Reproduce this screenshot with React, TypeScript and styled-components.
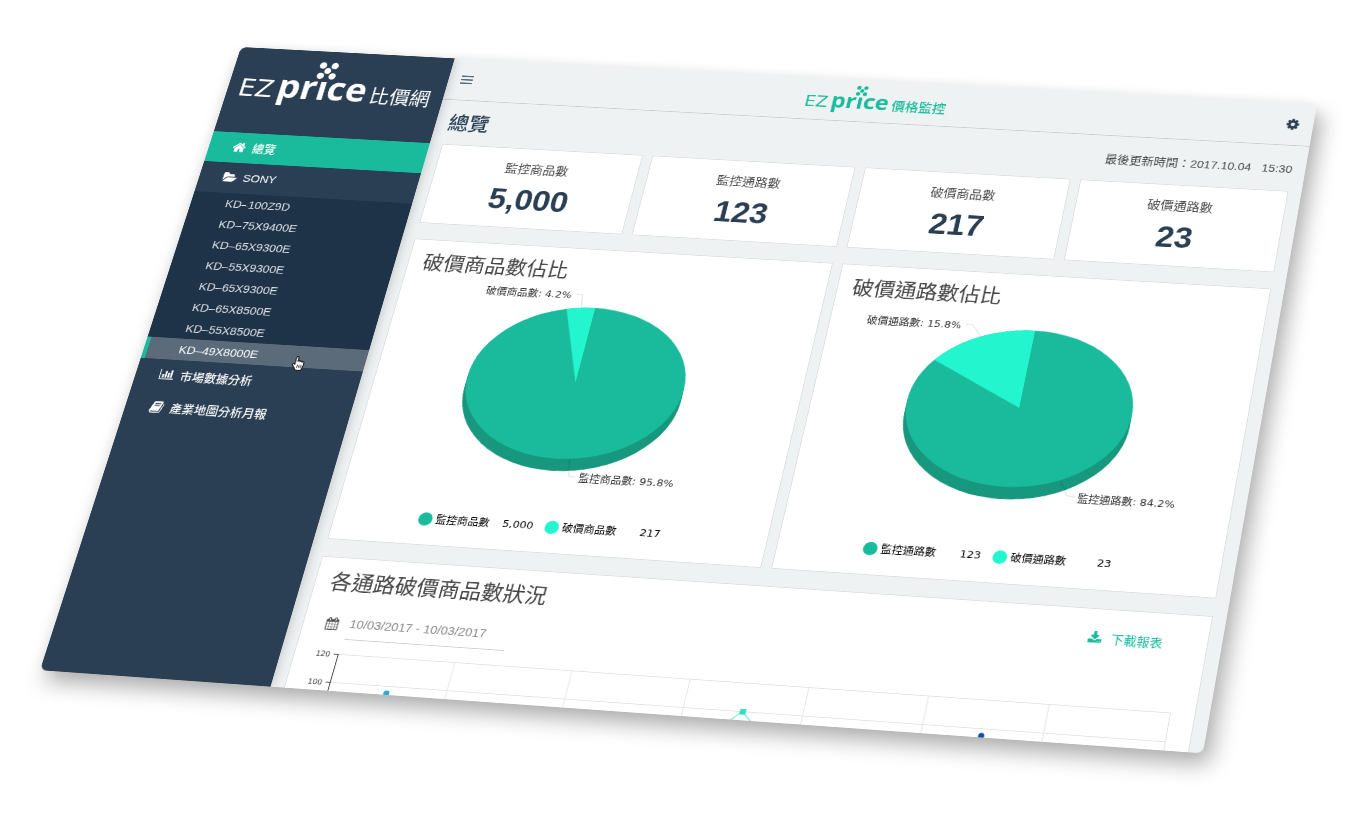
import React, { useLayoutEffect, useRef, useState } from 'react';
import styled, { createGlobalStyle, css } from 'styled-components';

const color = {
  navy: '#2a3f54',
  navyDark: '#1f3348',
  navyHover: '#5b6b7a',
  teal: '#1abb9c',
  tealDark: '#17977e',
  mint: '#23f5ce',
  page: '#eef2f3',
  line: '#dcdfe0',
  text: '#4a4a4a',
};

const sans = '"Liberation Sans", "Noto Sans CJK TC", sans-serif';
const chartFont = '"DejaVu Sans", "Noto Sans CJK TC", sans-serif';

const GlobalStyle = createGlobalStyle`
  *, *::before, *::after { box-sizing: border-box; }
  body { margin: 0; background: #fff; font-family: ${sans}; color: ${color.text}; }
  h1, h2, p, ul, dl, dd { margin: 0; padding: 0; }
  ul { list-style: none; }
  a { color: inherit; text-decoration: none; }
  button { border: 0; padding: 0; background: none; color: inherit; cursor: pointer; }
  svg { display: block; }
`;

/* ---------- tilted screen ---------- */

type Point = [number, number];

// Corners of the tilted screen as fractions of the stage width, clockwise from top left.
const CORNERS: Point[] = [
  [241 / 1366, 47 / 1366],
  [1317 / 1366, 104.3 / 1366],
  [1203 / 1366, 753.4 / 1366],
  [40 / 1366, 670.2 / 1366],
];
const SCREEN_RATIO = 850 / 1366;

function quadMatrix(stageWidth: number): string {
  const [[x0, y0], [x1, y1], [x2, y2], [x3, y3]] = CORNERS.map(([x, y]) => [x * stageWidth, y * stageWidth]);
  const w = stageWidth;
  const h = stageWidth * SCREEN_RATIO;
  const dx1 = x1 - x2, dx2 = x3 - x2, sx = x0 - x1 + x2 - x3;
  const dy1 = y1 - y2, dy2 = y3 - y2, sy = y0 - y1 + y2 - y3;
  const det = dx1 * dy2 - dx2 * dy1;
  const g = (sx * dy2 - dx2 * sy) / det;
  const k = (dx1 * sy - sx * dy1) / det;
  const m = [
    (x1 - x0 + g * x1) / w, (y1 - y0 + g * y1) / w, 0, g / w,
    (x3 - x0 + k * x3) / h, (y3 - y0 + k * y3) / h, 0, k / h,
    0, 0, 1, 0,
    x0, y0, 0, 1,
  ];
  return `matrix3d(${m.map((n) => n.toFixed(8)).join(',')})`;
}

const Stage = styled.div`
  width: 100%;
  aspect-ratio: 1366 / 820;
  overflow: hidden;
`;

const Screen = styled.div`
  display: flex;
  width: 100%;
  aspect-ratio: 1366 / 850;
  overflow: hidden;
  border-radius: 8px;
  background: ${color.page};
  transform-origin: 0 0;
  box-shadow: 10px 14px 26px rgba(0, 0, 0, 0.3), 0 0 20px rgba(0, 0, 0, 0.05);
`;

/* ---------- icons ---------- */

const ICONS = {
  home: [1792, 'M1472 992v480q0 26-19 45t-45 19h-384v-384h-256v384h-384q-26 0-45-19t-19-45v-480q0-1 .5-3t.5-3l575-474 575 474q1 2 1 6zm223-69l-62 74q-8 9-21 11h-3q-13 0-21-7l-692-577-692 577q-12 8-24 7-13-2-21-11l-62-74q-8-10-7-23.5t11-21.5l719-599q32-26 76-26t76 26l244 204v-195q0-14 9-23t23-9h192q14 0 23 9t9 23v408l219 182q10 8 11 21.5t-7 23.5z'],
  folder: [1943, 'M1943 952q0 31-31 66l-336 396q-43 51-120.5 86.5t-143.5 35.5h-1088q-34 0-60.5-13t-26.5-43q0-31 31-66l336-396q43-51 120.5-86.5t143.5-35.5h1088q34 0 60.5 13t26.5 43zm-343-344v160h-832q-94 0-197 47.5t-164 119.5l-337 396-5 6q0-4-.5-12.5t-.5-12.5v-960q0-92 66-158t158-66h320q92 0 158 66t66 158v32h544q92 0 158 66t66 158z'],
  chart: [2048, 'M640 768v512h-256v-512h256zm384-512v1024h-256v-1024h256zm1024 1152v128h-2048v-1536h128v1408h1920zm-640-896v768h-256v-768h256zm384-384v1152h-256v-1152h256z'],
  book: [1792, 'M1703 478q40 57 18 129l-275 906q-19 64-76.5 107.5t-122.5 43.5h-923q-77 0-148.5-53.5t-99.5-131.5q-24-67-2-127 0-4 3-27t4-37q1-8-3-21.5t-3-19.5q2-11 8-21t16.5-23.5 16.5-23.5q23-38 45-91.5t30-91.5q3-10 .5-30t-.5-28q3-11 17-28t17-23q21-36 42-92t25-90q1-9-2.5-32t.5-28q4-13 22-30.5t22-22.5q19-26 42.5-84.5t27.5-96.5q1-8-3-25.5t-2-26.5q2-8 9-18t18-23 17-21q8-12 16.5-30.5t15-35 16-36 19.5-32 26.5-23.5 36-11.5 47.5 5.5l-1 3q38-9 51-9h761q74 0 114 56t18 130l-274 906q-36 119-71.5 153.5t-128.5 34.5h-869q-27 0-38 15-11 16-1 43 24 70 144 70h923q29 0 56-15.5t35-41.5l300-987q7-22 5-57 38 15 59 43zm-1064 2q-4 13 2 22.5t20 9.5h608q13 0 25.5-9.5t16.5-22.5l21-64q4-13-2-22.5t-20-9.5h-608q-13 0-25.5 9.5t-16.5 22.5zm-83 256q-4 13 2 22.5t20 9.5h608q13 0 25.5-9.5t16.5-22.5l21-64q4-13-2-22.5t-20-9.5h-608q-13 0-25.5 9.5t-16.5 22.5z'],
  cog: [1792, 'M1152 896q0-106-75-181t-181-75-181 75-75 181 75 181 181 75 181-75 75-181zm512-109v222q0 12-8 23t-20 13l-185 28q-19 54-39 91 35 50 107 138 10 12 10 25t-9 23q-27 37-99 108t-94 71q-12 0-26-9l-138-108q-44 23-91 38-16 136-29 186-7 28-36 28h-222q-14 0-24.5-8.5t-11.5-21.5l-28-184q-49-16-90-37l-141 107q-10 9-25 9-14 0-25-11-126-114-165-168-7-10-7-23 0-12 8-23 15-21 51-66.5t54-70.5q-27-50-41-99l-183-27q-13-2-21-12.5t-8-23.5v-222q0-12 8-23t19-13l186-28q14-46 39-92-40-57-107-138-10-12-10-24 0-10 9-23 26-36 98.5-107.5t94.5-71.5q13 0 26 10l138 107q44-23 91-38 16-136 29-186 7-28 36-28h222q14 0 24.5 8.5t11.5 21.5l28 184q49 16 90 37l142-107q9-9 24-9 13 0 25 10 129 119 165 170 7 8 7 22 0 12-8 23-15 21-51 66.5t-54 70.5q26 50 41 98l183 28q13 2 21 12.5t8 23.5z'],
  calendar: [1792, 'M192 1664h288v-288h-288v288zm352 0h320v-288h-320v288zm-352-352h288v-320h-288v320zm352 0h320v-320h-320v320zm-352-384h288v-288h-288v288zm736 736h320v-288h-320v288zm-384-736h320v-288h-320v288zm768 736h288v-288h-288v288zm-384-352h320v-320h-320v320zm-352-864v-288q0-13-9.5-22.5t-22.5-9.5h-64q-13 0-22.5 9.5t-9.5 22.5v288q0 13 9.5 22.5t22.5 9.5h64q13 0 22.5-9.5t9.5-22.5zm736 864h288v-320h-288v320zm-384-384h320v-288h-320v288zm384 0h288v-288h-288v288zm32-480v-288q0-13-9.5-22.5t-22.5-9.5h-64q-13 0-22.5 9.5t-9.5 22.5v288q0 13 9.5 22.5t22.5 9.5h64q13 0 22.5-9.5t9.5-22.5zm384-64v1280q0 52-38 90t-90 38h-1408q-52 0-90-38t-38-90v-1280q0-52 38-90t90-38h128v-96q0-66 47-113t113-47h64q66 0 113 47t47 113v96h384v-96q0-66 47-113t113-47h64q66 0 113 47t47 113v96h128q52 0 90 38t38 90z'],
  download: [1792, 'M1344 1344q0-26-19-45t-45-19-45 19-19 45 19 45 45 19 45-19 19-45zm256 0q0-26-19-45t-45-19-45 19-19 45 19 45 45 19 45-19 19-45zm128-224v320q0 40-28 68t-68 28h-1472q-40 0-68-28t-28-68v-320q0-40 28-68t68-28h465l135 136q58 56 136 56t136-56l136-136h464q40 0 68 28t28 68zm-325-569q17 41-14 70l-448 448q-18 19-45 19t-45-19l-448-448q-31-29-14-70 17-39 59-39h256v-448q0-26 19-45t45-19h256q26 0 45 19t19 45v448h256q42 0 59 39z'],
} as const;

const IconSvg = styled.svg`
  flex: none;
  fill: currentColor;
  overflow: visible;
`;

function Icon({ name, size = 18 }: { name: keyof typeof ICONS; size?: number }) {
  const [width, d] = ICONS[name];
  return (
    <IconSvg width={size} height={size} viewBox={`0 0 ${width} 1792`} aria-hidden="true">
      <path d={d} />
    </IconSvg>
  );
}

/* ---------- brand ---------- */

const Brand = styled.span<{ $large?: boolean }>`
  display: inline-flex;
  align-items: baseline;
  gap: ${(p) => (p.$large ? 5 : 4)}px;
  color: ${(p) => (p.$large ? '#fff' : color.teal)};
  white-space: nowrap;
  line-height: 1;
`;
const BrandEz = styled.span<{ $large?: boolean }>`
  font-family: "DejaVu Sans", sans-serif;
  font-size: ${(p) => (p.$large ? 34 : 22)}px;
`;
const BrandPrice = styled.span<{ $large?: boolean }>`
  font-family: "Open Sans", sans-serif;
  font-weight: 700;
  font-size: ${(p) => (p.$large ? 46 : 29)}px;
`;
const BrandTail = styled.span<{ $large?: boolean }>`
  font-weight: ${(p) => (p.$large ? 400 : 500)};
  font-size: ${(p) => (p.$large ? 26 : 17)}px;
`;
const BrandStem = styled.span`
  position: relative;
`;
const BrandDots = styled.svg<{ $large?: boolean }>`
  position: absolute;
  left: 50%;
  bottom: ${(p) => (p.$large ? 42 : 26)}px;
  width: ${(p) => (p.$large ? 26 : 15)}px;
  height: ${(p) => (p.$large ? 26 : 15)}px;
  transform: translateX(-50%);
  fill: currentColor;
`;

function Logo({ tail, large }: { tail: string; large?: boolean }) {
  return (
    <Brand $large={large}>
      <BrandEz $large={large}>EZ</BrandEz>
      <BrandPrice $large={large}>
        pr
        <BrandStem>
          ı
          <BrandDots $large={large} viewBox="0 0 24 24" aria-hidden="true">
            <circle cx="5" cy="5" r="4.2" />
            <circle cx="19" cy="5" r="4.2" />
            <circle cx="12" cy="12" r="4" />
            <circle cx="5" cy="19" r="4.2" />
            <circle cx="19" cy="19" r="4.2" />
          </BrandDots>
        </BrandStem>
        ce
      </BrandPrice>
      <BrandTail $large={large}>{tail}</BrandTail>
    </Brand>
  );
}

/* ---------- sidebar ---------- */

const Sidebar = styled.aside`
  position: relative;
  z-index: 1;
  flex: none;
  width: 278px;
  background: ${color.navy};
  color: #fff;
  box-shadow: 0 0 14px rgba(0, 0, 0, 0.22);
`;
const SidebarHead = styled.div`
  display: flex;
  align-items: flex-start;
  height: 123px;
  padding: 29px 0 0 14px;
`;
const NavLink = styled.a<{ $active?: boolean }>`
  display: flex;
  align-items: center;
  gap: 8px;
  height: 43px;
  padding: 0 0 2px 30px;
  font-size: 15px;
  font-weight: 500;
  ${(p) => p.$active && css`background: ${color.teal};`}
`;
const SubNav = styled.ul`
  background: ${color.navyDark};
`;
const SubLink = styled.a<{ $hover?: boolean }>`
  position: relative;
  display: flex;
  align-items: center;
  height: 29px;
  padding-left: 39px;
  border-left: 5px solid transparent;
  font-size: 15px;
  color: #dfe4e8;
  ${(p) => p.$hover && css`
    background: ${color.navyHover};
    border-left-color: ${color.teal};
    color: #fff;
  `}
`;
const Pointer = styled.svg`
  position: absolute;
  left: 182px;
  top: 14px;
  z-index: 1;
`;

const MODELS = ['KD–100Z9D', 'KD–75X9400E', 'KD–65X9300E', 'KD–55X9300E', 'KD–65X9300E', 'KD–65X8500E', 'KD–55X8500E', 'KD–49X8000E'];

function SideNav() {
  return (
    <Sidebar>
      <SidebarHead><Logo tail="比價網" large /></SidebarHead>
      <nav>
        <ul>
          <li><NavLink href="#overview" $active><Icon name="home" />總覽</NavLink></li>
          <li>
            <NavLink href="#sony"><Icon name="folder" />SONY</NavLink>
            <SubNav>
              {MODELS.map((model, i) => {
                const hover = i === MODELS.length - 1;
                return (
                  <li key={i}>
                    <SubLink href="#model" $hover={hover}>
                      {model}
                      {hover && (
                        <Pointer width="18" height="20" viewBox="0 0 18 20" aria-hidden="true">
                          <path
                            d="M5 1.8a1.4 1.4 0 0 1 2.8 0v5a1.3 1.3 0 0 1 2.6.4 1.3 1.3 0 0 1 2.6.5 1.3 1.3 0 0 1 2.6.8v4.3c0 2-1.2 3.2-1.4 5.7H7c-.5-2-3.2-4.4-4.6-6.6-.8-1.3.8-2.4 2-1.3l.6.7z"
                            fill="#fff" stroke="#111" strokeWidth="1.2" strokeLinejoin="round"
                          />
                          <path d="M8.5 11.5v4M10.8 11.5v4M13 11.5v4" stroke="#111" strokeWidth="1" />
                        </Pointer>
                      )}
                    </SubLink>
                  </li>
                );
              })}
            </SubNav>
          </li>
          <li><NavLink href="#market"><Icon name="chart" />市場數據分析</NavLink></li>
          <li><NavLink href="#industry"><Icon name="book" />產業地圖分析月報</NavLink></li>
        </ul>
      </nav>
    </Sidebar>
  );
}

/* ---------- main column ---------- */

const Main = styled.main`
  flex: 1;
  min-width: 0;
`;
const TopBar = styled.header`
  display: grid;
  grid-template-columns: 1fr auto 1fr;
  align-items: center;
  height: 60px;
  padding: 0 16px;
  border-bottom: 1px solid #cbced0;
  color: ${color.navy};
`;
const MenuButton = styled.button`
  justify-self: start;
`;
const CogButton = styled.button`
  justify-self: end;
`;
const Content = styled.div`
  display: flex;
  flex-direction: column;
  padding: 0 16px;
`;
const TitleRow = styled.div`
  display: flex;
  align-items: center;
  justify-content: space-between;
  height: 63px;
`;
const PageTitle = styled.h1`
  padding-bottom: 3px;
  font-size: 26px;
  font-weight: 500;
  color: ${color.navy};
`;
const Updated = styled.p`
  font-size: 15px;
  white-space: pre;
`;
const CardGrid = styled.div<{ $columns: number }>`
  display: grid;
  grid-template-columns: repeat(${(p) => p.$columns}, 1fr);
  gap: 12px;
  margin-bottom: 22px;
`;
const Card = styled.section`
  background: #fff;
  border: 1px solid ${color.line};
`;
const StatCard = styled(Card)`
  display: flex;
  flex-direction: column;
  align-items: center;
  height: 112px;
  padding-top: 17px;
`;
const StatLabel = styled.h2`
  font-size: 16px;
  line-height: 24px;
  font-weight: 400;
`;
const StatValue = styled.p`
  font-size: 40px;
  line-height: 60px;
  font-weight: 700;
  color: ${color.navy};
`;
const CardTitle = styled.h2`
  font-size: 26px;
  line-height: 38px;
  font-weight: 400;
  color: #444;
`;

const STATS = [
  ['監控商品數', '5,000'],
  ['監控通路數', '123'],
  ['破價商品數', '217'],
  ['破價通路數', '23'],
];

/* ---------- pie charts ---------- */

const PieCard = styled(Card)`
  height: 404px;
  padding-top: 12px;
`;
const PieTitle = styled(CardTitle)`
  padding-left: 18px;
`;
const PieSvg = styled.svg`
  width: 100%;
  height: 300px;
  font-family: ${chartFont};
  font-size: 13px;
`;
const Legend = styled.dl`
  display: flex;
  justify-content: center;
  gap: 14px;
  margin-top: 6px;
  padding-right: 26px;
  font-family: ${chartFont};
  font-size: 13px;
  line-height: 26px;
  color: #000;
`;
const LegendItem = styled.div`
  display: flex;
  align-items: center;
  width: 139px;
`;
const Swatch = styled.span<{ $color: string }>`
  width: 17px;
  height: 17px;
  margin-right: 4px;
  border-radius: 50%;
  background: ${(p) => p.$color};
`;
const LegendValue = styled.dd`
  flex: 1;
  text-align: right;
`;

type PieData = {
  title: string;
  cx: number; cy: number; rx: number; ry: number;
  share: number;
  small: { name: string; value: string; text: Point; leader: string };
  large: { name: string; value: string; text: Point; leader: string };
};

const PIES: PieData[] = [
  {
    title: '破價商品數佔比', cx: 245, cy: 130, rx: 133, ry: 101, share: 4.2,
    small: { name: '破價商品數', value: '217', text: [-33, -112], leader: '-27,-118 -20,-118 -17,-100' },
    large: { name: '監控商品數', value: '5,000', text: [34, 128], leader: '17,100 22,123 29,123' },
  },
  {
    title: '破價通路數佔比', cx: 249, cy: 127, rx: 135, ry: 103, share: 15.8,
    small: { name: '破價通路數', value: '23', text: [-90, -100], leader: '-84,-106 -76,-106 -64,-91' },
    large: { name: '監控通路數', value: '123', text: [90, 116], leader: '66,91 78,110 87,110' },
  },
];

function Pie({ data }: { data: PieData }) {
  const { cx, cy, rx, ry, share, small, large } = data;
  const depth = 16;
  const angle = (share / 100) * Math.PI * 2;
  const wx = -rx * Math.sin(angle);
  const wy = -ry * Math.cos(angle);
  return (
    <PieCard>
      <PieTitle>{data.title}</PieTitle>
      <PieSvg viewBox="0 0 520 300" role="img" aria-label={data.title}>
        <g transform={`translate(${cx} ${cy})`}>
          <path d={`M${-rx} 0v${depth}a${rx} ${ry} 0 0 0 ${rx * 2} 0v${-depth}z`} fill={color.tealDark} />
          <ellipse rx={rx} ry={ry} fill={color.teal} />
          <path d={`M0 0L${wx} ${wy}A${rx} ${ry} 0 0 1 0 ${-ry}z`} fill={color.mint} />
          <g fill="none" stroke="#000" strokeOpacity="0.15">
            <polyline points={small.leader} />
            <polyline points={large.leader} />
          </g>
          <g fill="#333">
            <text x={small.text[0]} y={small.text[1]} textAnchor="end">{`${small.name}: ${share}%`}</text>
            <text x={large.text[0]} y={large.text[1]}>{`${large.name}: ${(100 - share).toFixed(1)}%`}</text>
          </g>
        </g>
      </PieSvg>
      <Legend>
        <LegendItem><Swatch $color={color.teal} /><dt>{large.name}</dt><LegendValue>{large.value}</LegendValue></LegendItem>
        <LegendItem><Swatch $color={color.mint} /><dt>{small.name}</dt><LegendValue>{small.value}</LegendValue></LegendItem>
      </Legend>
    </PieCard>
  );
}

/* ---------- channel report ---------- */

const ReportCard = styled(Card)`
  height: 404px;
  padding-top: 12px;
`;
const ReportHead = styled.div`
  display: flex;
  align-items: center;
  justify-content: space-between;
  padding: 0 51px 0 18px;
`;
const Download = styled.a`
  display: flex;
  align-items: center;
  gap: 10px;
  padding-top: 9px;
  font-size: 15px;
  color: ${color.teal};
`;
const DateField = styled.label`
  display: flex;
  align-items: center;
  gap: 12px;
  margin-top: 14px;
  padding-left: 26px;
  color: #555;
`;
const DateInput = styled.input`
  width: 191px;
  height: 38px;
  padding: 0 0 2px 1px;
  border: 0;
  border-bottom: 1px solid #cfcfcf;
  background: none;
  font-family: ${sans};
  font-size: 15px;
  color: #888;
`;
const LineSvg = styled.svg`
  width: 100%;
  margin-top: 10px;
  font-family: ${chartFont};
  font-size: 9px;
`;

const STEP = 139;
const AXIS_X = 51;

function ChannelReport() {
  const columns = Array.from({ length: 7 }, (_, i) => AXIS_X + STEP * (i + 1));
  const right = columns[6];
  return (
    <ReportCard>
      <ReportHead>
        <CardTitle>各通路破價商品數狀況</CardTitle>
        <Download href="#download"><Icon name="download" size={17} />下載報表</Download>
      </ReportHead>
      <DateField>
        <Icon name="calendar" size={16} />
        <DateInput type="text" aria-label="日期範圍" defaultValue="10/03/2017 - 10/03/2017" />
      </DateField>
      <LineSvg viewBox="0 0 1052 200" role="img" aria-label="各通路破價商品數狀況">
        <g stroke="#e2e2e2" fill="none">
          <path d={`M${AXIS_X} 8.5H${right}M${AXIS_X} 43.5H${right}`} />
          {columns.map((x) => <path key={x} d={`M${x + 0.5} 8V200`} />)}
        </g>
        <path d={`M${AXIS_X + 0.5} 8V200M${AXIS_X - 5} 8.5h5M${AXIS_X - 5} 43.5h5`} stroke="#333" fill="none" />
        <g fill="#333" textAnchor="end">
          <text x={AXIS_X - 9} y="12">120</text>
          <text x={AXIS_X - 9} y="47">100</text>
        </g>
        <polyline
          points={`${AXIS_X + STEP * 2.5},180 ${AXIS_X + STEP * 3.5},43 ${AXIS_X + STEP * 4.5},180`}
          fill="none" stroke="#7fecd6" strokeWidth="1.5"
        />
        <rect x={AXIS_X + STEP * 3.5 - 3} y="40" width="7" height="7" fill="#2fe0bd" />
        <circle cx={AXIS_X + STEP * 0.5} cy="52" r="3.5" fill="#26a9dc" />
        <circle cx={AXIS_X + STEP * 5.5} cy="52" r="3.5" fill="#0d4f9c" />
      </LineSvg>
    </ReportCard>
  );
}

/* ---------- page ---------- */

export default function App() {
  const stage = useRef<HTMLDivElement>(null);
  const [width, setWidth] = useState(1366);

  useLayoutEffect(() => {
    const node = stage.current;
    if (!node) return;
    const measure = () => setWidth(node.clientWidth);
    measure();
    const observer = new ResizeObserver(measure);
    observer.observe(node);
    return () => observer.disconnect();
  }, []);

  return (
    <Stage ref={stage}>
      <GlobalStyle />
      <Screen style={{ transform: quadMatrix(width) }}>
        <SideNav />
        <Main>
          <TopBar>
            <MenuButton type="button" aria-label="選單">
              <svg width="15" height="12" viewBox="0 0 15 12" stroke="currentColor" strokeWidth="1.5" aria-hidden="true">
                <path d="M0 1h15M0 6h15M0 11h15" />
              </svg>
            </MenuButton>
            <Logo tail="價格監控" />
            <CogButton type="button" aria-label="設定"><Icon name="cog" /></CogButton>
          </TopBar>
          <Content>
            <TitleRow>
              <PageTitle>總覽</PageTitle>
              <Updated>{'最後更新時間：2017.10.04\u00a0\u00a0\u00a015:30'}</Updated>
            </TitleRow>
            <CardGrid $columns={4}>
              {STATS.map(([label, value]) => (
                <StatCard key={label}>
                  <StatLabel>{label}</StatLabel>
                  <StatValue>{value}</StatValue>
                </StatCard>
              ))}
            </CardGrid>
            <CardGrid $columns={2}>
              {PIES.map((pie) => <Pie key={pie.title} data={pie} />)}
            </CardGrid>
            <ChannelReport />
          </Content>
        </Main>
      </Screen>
    </Stage>
  );
}
